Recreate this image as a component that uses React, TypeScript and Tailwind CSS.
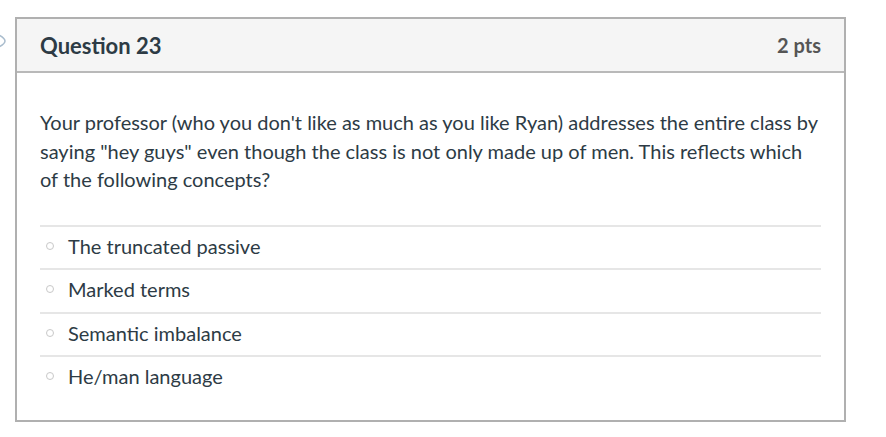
const answers = ['The truncated passive', 'Marked terms', 'Semantic imbalance', 'He/man language'];

export default function App() {
    return (
        <div className="relative h-[437px] w-[886px] bg-white pl-[15px] pt-[17px] font-['Lato','Noto_Sans',sans-serif] text-[#2d3b45]">
            {/* partially visible flag icon on the left edge */}
            <svg className="absolute left-[-9px] top-[33px] h-[16px] w-[16px]" viewBox="0 0 16 16" fill="none">
                <path d="M7 1.5 C12 4, 14 6, 14 8 C14 10, 12 12, 7 14.5" stroke="#a9bccd" strokeWidth="1.5" strokeLinecap="round"/>
            </svg>

            <div className="h-[405px] w-[831px] border-2 border-[#b0b0b0] bg-white">
                <div className="flex h-[54px] items-center justify-between border-b-2 border-[#b9b9b9] bg-[#f5f5f5] pl-[23px] pr-[23px]">
                    <h2 className="text-[22px] font-bold">Question 23</h2>
                    <span className="text-[20px] font-bold text-[#555555]">2 pts</span>
                </div>

                <div className="px-[23px] pt-[35px]">
                    <p className="text-[20px] leading-[28.5px]">
                        Your professor (who you don't like as much as you like Ryan) addresses the entire class by saying "hey guys" even though the class is not only made up of men. This reflects which of the following concepts?
                    </p>

                    <div className="mt-[31px]">
                        {answers.map((a) => (
                            <div key={a} className="flex h-[43.5px] items-center border-t-2 border-[#e6e6e6] pb-[3px]">
                                <span className="ml-[6px] mr-[14px] h-[8px] w-[8px] rounded-full border border-[#c8c8c8]"></span>
                                <span className="text-[20px]">{a}</span>
                            </div>
                        ))}
                    </div>
                </div>
            </div>
        </div>
    );
}
